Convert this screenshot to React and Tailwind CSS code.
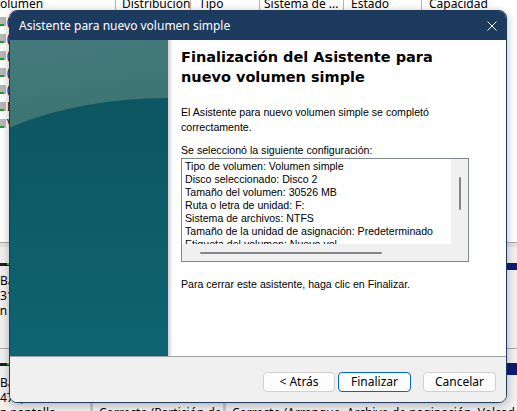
export default function App() {
  const rows = ["(C:)", "(D:)", "(E:)", "(F:)", "(G:)", "DATOS (H:)", "Volumen (I:)"];
  return (
    <div className="relative w-[517px] h-[411px] overflow-hidden bg-white text-black font-['Noto_Sans',sans-serif]">
      {/* background: disk management window */}
      <div className="flex flex-col h-full">
        <div className="flex h-[10px] shrink-0 overflow-hidden bg-white text-[12px] leading-[12px]">
          <div className="w-[115px] shrink-0 -mt-[2px] pl-0">olumen</div>
          <div className="w-[75px] shrink-0 -mt-[2px] pl-[6px] border-l border-[#b5b5b5]">Distribución</div>
          <div className="w-[69px] shrink-0 -mt-[2px] pl-[8px] border-l border-[#b5b5b5]">Tipo</div>
          <div className="w-[84px] shrink-0 -mt-[2px] pl-[4px] border-l border-[#b5b5b5]">Sistema de ...</div>
          <div className="w-[78px] shrink-0 -mt-[2px] pl-[7px] border-l border-[#b5b5b5]">Estado</div>
          <div className="flex-1 -mt-[2px] pl-[7px] border-l border-[#b5b5b5]">Capacidad</div>
        </div>
        <div className="h-[232px] shrink-0 bg-white pt-[3px] flex flex-col text-[12px] leading-[17px]">
          {rows.map((r) => (
            <div key={r} className="h-[17px] flex items-center gap-[1px] whitespace-nowrap">
              <span className="w-[6px] h-[9px] bg-[#b8b8b8] flex items-end"><span className="w-[4px] h-[2px] bg-[#1f9d2a]" /></span>
              <span>{r}</span>
            </div>
          ))}
        </div>
        <div className="h-[5px] shrink-0 bg-[#e2e2e2] border-t border-[#a8a8a8]" />
        <div className="flex-1 bg-[#f0f0f0] pt-[16px] flex flex-col text-[12px] leading-[15px]">
          <div className="h-[86px] shrink-0 flex border-b border-[#a8a8a8]">
            <div className="w-[90px] shrink-0 flex flex-col">
              <div className="h-[3px] bg-[#1e1e1e] flex pl-[7px]"><span className="w-[2px] h-[2px] bg-[#2fd03f]" /></div>
              <div className="pt-[7px] whitespace-nowrap flex flex-col">
                <span>Básico</span>
                <span>31,99 GB</span>
                <span className="-ml-[7px]">En pantalla</span>
              </div>
            </div>
            <div className="flex-1 flex">
              <div className="flex-1 flex flex-col border-l border-[#c8c8c8]"><div className="h-[7px] bg-[#0c1d7a]" /></div>
              <div className="w-[4px] flex flex-col"><div className="h-[7px] bg-[#0c1d7a]" /></div>
            </div>
          </div>
          <div className="flex-1 flex mt-[14px]">
            <div className="w-[90px] shrink-0 flex flex-col">
              <div className="h-[3px] bg-[#1e1e1e] flex pl-[7px]"><span className="w-[2px] h-[2px] bg-[#2fd03f]" /></div>
              <div className="pt-[9px] whitespace-nowrap flex flex-col">
                <span>Básico</span>
                <span>476,92 GB</span>
                <span className="-ml-[7px]">En pantalla</span>
              </div>
            </div>
            <div className="w-[133px] shrink-0 flex flex-col border-l-[3px] border-[#c8c8c8]">
              <div className="h-[12px] bg-[#0c1d7a]" />
              <div className="pt-[30px] pl-[6px] whitespace-nowrap">Correcto (Partición de</div>
            </div>
            <div className="flex-1 flex flex-col border-l-[3px] border-[#c8c8c8] overflow-hidden">
              <div className="h-[12px] bg-[#0c1d7a]" />
              <div className="pt-[30px] pl-[6px] whitespace-nowrap">Correcto (Arranque, Archivo de paginación, Volcado, Partición primaria)</div>
            </div>
          </div>
        </div>
      </div>

      {/* dialog window */}
      <div className="absolute left-[9px] top-[10px] w-[498px] h-[393px] rounded-[8px] border border-[#1c3b5e] overflow-hidden flex flex-col bg-white shadow-[0_2px_10px_rgba(0,0,0,0.28)]">
        <div className="h-[29px] shrink-0 bg-[#1c3b5e] flex items-center pl-[9px] pr-[9px] text-white text-[12px]">
          <span className="flex-1">Asistente para nuevo volumen simple</span>
          <svg width="10" height="10" viewBox="0 0 10 10" className="shrink-0">
            <path d="M0.5 0.5 L9.5 9.5 M9.5 0.5 L0.5 9.5" stroke="#ffffff" strokeWidth="1" fill="none" />
          </svg>
        </div>
        <div className="h-[316px] shrink-0 flex">
          <div className="w-[158px] shrink-0 relative overflow-hidden bg-[linear-gradient(170deg,#457a7b_0%,#35716f_45%,#286769_100%)]">
            <div className="absolute left-[-60px] top-[58px] w-[440px] h-[400px] rounded-tl-[220px_95px] rounded-tr-[220px_95px] bg-[linear-gradient(180deg,#0c5662_0%,#0e5e6b_40%,#136c7c_100%)]" />
          </div>
          <div className="w-[4px] shrink-0 bg-[linear-gradient(90deg,#d2d2d2,#f4f4f4)]" />
          <div className="flex-1 pl-[9px] flex flex-col">
            <div className="pt-[7px] font-['DejaVu_Sans',sans-serif] font-bold text-[14.5px] leading-[20px] whitespace-nowrap">
              Finalización del Asistente para<br />nuevo volumen simple
            </div>
            <div className="mt-[18px] font-['Liberation_Sans',Arial,sans-serif] text-[10.6px] leading-[15px]">
              El Asistente para nuevo volumen simple se completó<br />correctamente.
            </div>
            <div className="mt-[8px] font-['Liberation_Sans',Arial,sans-serif] text-[10.6px] leading-[14px]">
              Se seleccionó la siguiente configuración:
            </div>
            <div className="mt-[1px] w-[288px] h-[104px] border border-[#828790] flex flex-col font-['Liberation_Sans',Arial,sans-serif] text-[10.6px] leading-[13px]">
              <div className="flex flex-1 min-h-0">
                <div className="flex-1 overflow-hidden bg-white pl-[3px] pt-[1px] whitespace-nowrap">
                  <div>Tipo de volumen: Volumen simple</div>
                  <div>Disco seleccionado: Disco 2</div>
                  <div>Tamaño del volumen: 30526 MB</div>
                  <div>Ruta o letra de unidad: F:</div>
                  <div>Sistema de archivos: NTFS</div>
                  <div>Tamaño de la unidad de asignación: Predeterminado</div>
                  <div>Etiqueta del volumen: Nuevo vol</div>
                </div>
                <div className="w-[17px] shrink-0 bg-[#f0f0f0] flex justify-center pt-[18px]">
                  <div className="w-[2px] h-[33px] bg-[#858585] rounded-full" />
                </div>
              </div>
              <div className="h-[17px] shrink-0 bg-[#f0f0f0] flex items-center pl-[18px]">
                <div className="h-[2px] w-[182px] bg-[#858585] rounded-full" />
              </div>
            </div>
            <div className="mt-[15px] font-['Liberation_Sans',Arial,sans-serif] text-[10.6px] leading-[14px]">
              Para cerrar este asistente, haga clic en Finalizar.
            </div>
          </div>
        </div>
        <div className="flex-1 border-t border-[#a0a0a0] bg-[#f0f0f0] flex items-start justify-end pt-[15px] pr-[10px] text-[12px]">
          <button className="w-[72px] h-[20px] rounded-[4px] border border-[#d0d0d0] bg-[#fdfdfd] leading-[18px]">&lt; Atrás</button>
          <button className="ml-[3px] w-[73px] h-[20px] rounded-[4px] border border-[#0067c0] bg-[#fdfdfd] leading-[18px]">Finalizar</button>
          <button className="ml-[12px] w-[73px] h-[20px] rounded-[4px] border border-[#d0d0d0] bg-[#fdfdfd] leading-[18px]">Cancelar</button>
        </div>
      </div>
    </div>
  );
}
